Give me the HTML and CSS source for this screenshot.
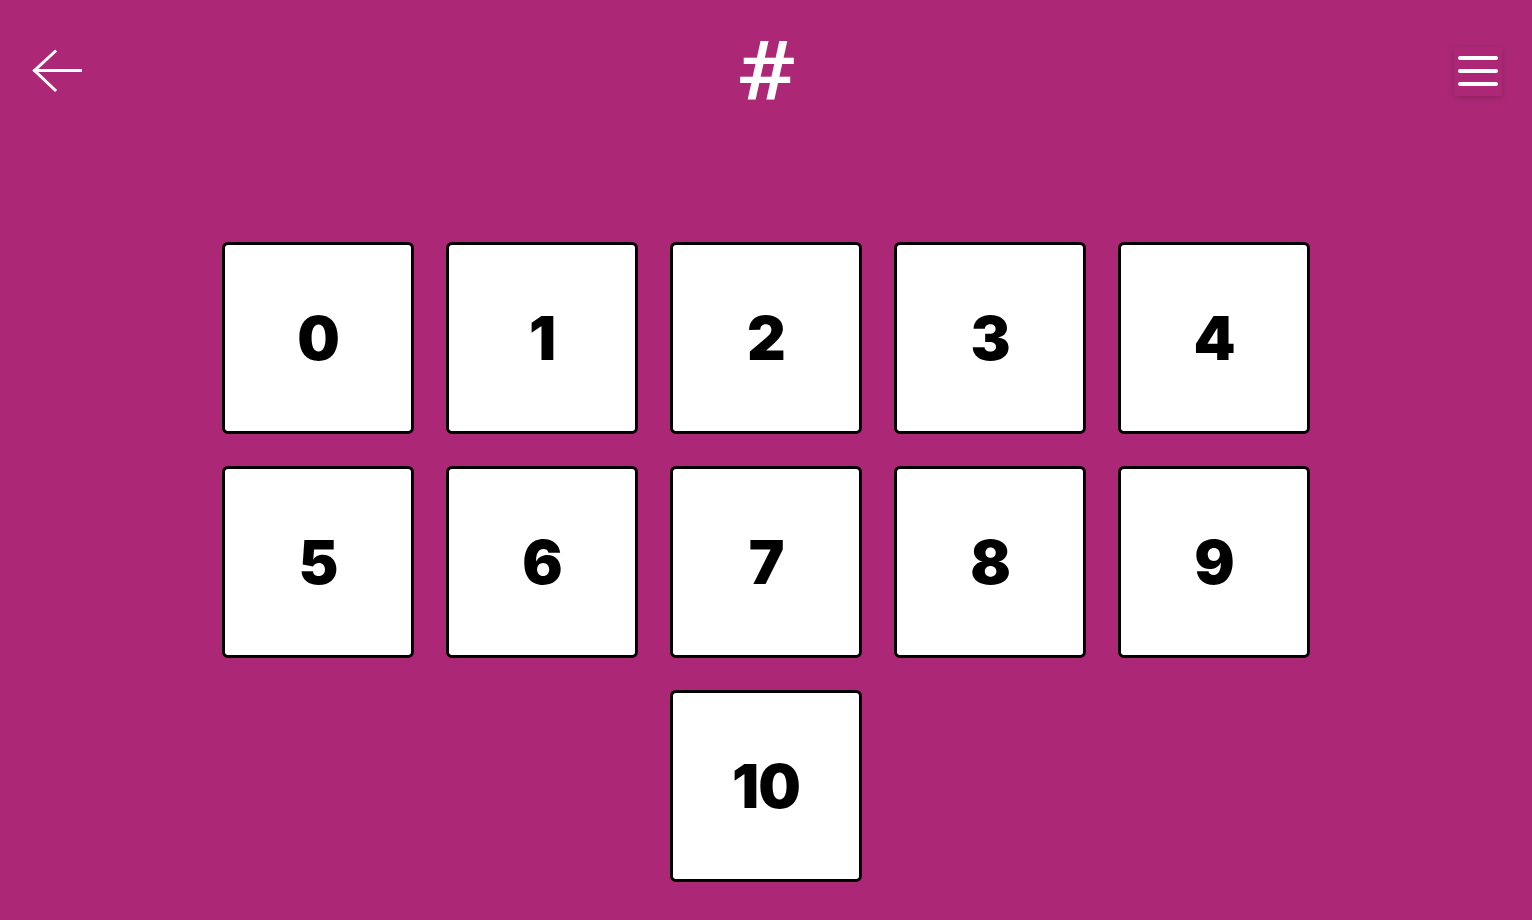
FILE: index.html
```html
<!DOCTYPE html>
<html lang="en">
<head>
<meta charset="utf-8">
<title>Numbers</title>
<link rel="stylesheet" href="styles.css">
</head>
<body>
<header class="topbar">
  <button class="back" aria-label="Back">
    <svg width="50" height="44" viewBox="0 0 50 44" fill="none" stroke="#fff" stroke-width="3" stroke-linecap="square">
      <path d="M48.5 21.5H2.5"/>
      <path d="M23 2.5L2.5 21.5L23 41"/>
    </svg>
  </button>
  <h1 class="title">#</h1>
  <button class="menu" aria-label="Menu">
    <span></span><span></span><span></span>
  </button>
</header>
<main class="grid">
  <div class="tile">0</div>
  <div class="tile">1</div>
  <div class="tile">2</div>
  <div class="tile">3</div>
  <div class="tile">4</div>
  <div class="tile">5</div>
  <div class="tile">6</div>
  <div class="tile">7</div>
  <div class="tile">8</div>
  <div class="tile">9</div>
  <div class="tile tile-center">10</div>
</main>
</body>
</html>
```
FILE: styles.css
```css
html, body {
  margin: 0;
  padding: 0;
}
body {
  background: #ac2876;
  width: 1532px;
  height: 920px;
  overflow: hidden;
  font-family: Inter, "Noto Sans", sans-serif;
}
.topbar {
  height: 142px;
  display: flex;
  align-items: center;
  justify-content: space-between;
  padding: 0 30px 0 32px;
  box-sizing: border-box;
  position: relative;
}
.back {
  background: none;
  border: 0;
  padding: 0;
  width: 50px;
  height: 44px;
  display: block;
  cursor: pointer;
}
.back svg { display: block; }
.title {
  margin: 0 auto;
  width: max-content;
  color: #fff;
  font-family: Roboto, sans-serif;
  font-weight: 500;
  font-size: 82px;
  line-height: 1;
  position: absolute;
  left: 0;
  right: 0;
  top: 30px;
  transform: scaleX(1.2);
  pointer-events: none;
}
.menu {
  width: 48px;
  height: 49px;
  border: 0;
  padding: 0;
  background: #ac2876;
  box-shadow: 0 2px 6px rgba(0,0,0,0.18);
  display: flex;
  flex-direction: column;
  align-items: center;
  justify-content: center;
  gap: 9px;
  cursor: pointer;
}
.menu span {
  display: block;
  width: 40px;
  height: 4px;
  border-radius: 2px;
  background: #fff;
}
.grid {
  margin-top: 100px;
  display: grid;
  grid-template-columns: repeat(5, 192px);
  grid-auto-rows: 192px;
  gap: 32px;
  justify-content: center;
}
.tile {
  box-sizing: border-box;
  background: #fff;
  border: 3px solid #000;
  border-radius: 6px;
  display: flex;
  align-items: center;
  justify-content: center;
  font-weight: 900;
  font-size: 60px;
  color: #000;
  letter-spacing: -1px;
}
.tile-center {
  grid-column: 3;
}
```
